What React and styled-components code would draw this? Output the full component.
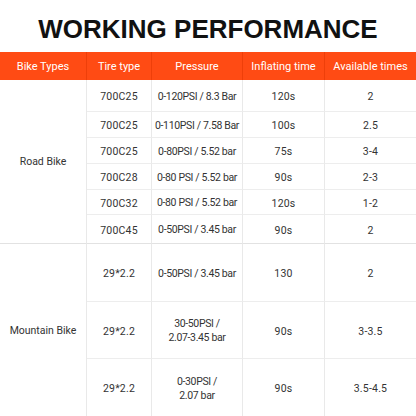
import styled, { createGlobalStyle } from 'styled-components';

const GlobalStyle = createGlobalStyle`
  body {
    margin: 0;
    background: #ffffff;
    font-family: Roboto, "Liberation Sans", Arial, sans-serif;
  }
`;

const roadRows = [
  { tire: '700C25', pressure: ['0-120PSI / 8.3 Bar'], time: '120s', times: '2' },
  { tire: '700C25', pressure: ['0-110PSI / 7.58 Bar'], time: '100s', times: '2.5' },
  { tire: '700C25', pressure: ['0-80PSI / 5.52 bar'], time: '75s', times: '3-4' },
  { tire: '700C28', pressure: ['0-80 PSI / 5.52 bar'], time: '90s', times: '2-3' },
  { tire: '700C32', pressure: ['0-80 PSI / 5.52 bar'], time: '120s', times: '1-2' },
  { tire: '700C45', pressure: ['0-50PSI / 3.45 bar'], time: '90s', times: '2' },
];

const mountainRows = [
  { tire: '29*2.2', pressure: ['0-50PSI / 3.45 bar'], time: '130', times: '2' },
  { tire: '29*2.2', pressure: ['30-50PSI /', '2.07-3.45 bar'], time: '90s', times: '3-3.5' },
  { tire: '29*2.2', pressure: ['0-30PSI /', '2.07 bar'], time: '90s', times: '3.5-4.5' },
];

const headers = ['Bike Types', 'Tire type', 'Pressure', 'Inflating time', 'Available times'];

const App = () => {
  return (
    <Page>
      <GlobalStyle />
      <Title>WORKING PERFORMANCE</Title>
      <Table>
        {headers.map((h, i) => (
          <HeadCell key={h} $last={i === headers.length - 1}>{h}</HeadCell>
        ))}

        <TypeCell $span={roadRows.length}>Road Bike</TypeCell>
        {roadRows.map((row, i) => {
          const end = i === roadRows.length - 1;
          return [
            <Cell key={`rt${i}`} $strong={end}>{row.tire}</Cell>,
            <Cell key={`rp${i}`} $strong={end} $tight>{row.pressure.map((p) => <Line key={p}>{p}</Line>)}</Cell>,
            <Cell key={`ri${i}`} $strong={end}>{row.time}</Cell>,
            <Cell key={`ra${i}`} $strong={end} $last>{row.times}</Cell>,
          ];
        })}

        <TypeCell $span={mountainRows.length} $open>Mountain Bike</TypeCell>
        {mountainRows.map((row, i) => {
          const end = i === mountainRows.length - 1;
          return [
            <Cell key={`mt${i}`} $open={end}>{row.tire}</Cell>,
            <Cell key={`mp${i}`} $open={end} $tight>{row.pressure.map((p) => <Line key={p}>{p}</Line>)}</Cell>,
            <Cell key={`mi${i}`} $open={end}>{row.time}</Cell>,
            <Cell key={`ma${i}`} $open={end} $last>{row.times}</Cell>,
          ];
        })}
      </Table>
    </Page>
  );
};

const Page = styled.div`
  width: 416px;
  height: 416px;
  overflow: hidden;
  background: #ffffff;
`;

const Title = styled.div`
  height: 52px;
  display: flex;
  align-items: center;
  justify-content: center;
  padding-top: 6px;
  box-sizing: border-box;
  font-family: "Liberation Sans", Arial, sans-serif;
  font-size: 26px;
  font-weight: bold;
  color: #111111;
`;

const Table = styled.div`
  display: grid;
  grid-template-columns: 87px 65px 91px 82px 91px;
  grid-template-rows: 28px 32px 26px 26px 26px 25px 29px 58px 57px 57px;
`;

const HeadCell = styled.div`
  display: flex;
  align-items: center;
  justify-content: center;
  white-space: nowrap;
  background: #ff4b14;
  color: #ffffff;
  font-size: 11px;
  border-right: ${(p) => (p.$last ? 'none' : '1px solid #ee3f0a')};
`;

const TypeCell = styled.div`
  grid-row: span ${(p) => p.$span};
  display: flex;
  align-items: center;
  justify-content: center;
  font-size: 10.5px;
  color: #333333;
  border-right: 1px solid #e9e9e9;
  border-bottom: ${(p) => (p.$open ? 'none' : '1px solid #e2e2e2')};
`;

const Cell = styled.div`
  display: flex;
  flex-direction: column;
  align-items: center;
  justify-content: center;
  text-align: center;
  white-space: nowrap;
  font-size: 10.5px;
  letter-spacing: ${(p) => (p.$tight ? '-0.35px' : '0.2px')};
  color: #333333;
  padding-top: 2px;
  box-sizing: border-box;
  border-right: ${(p) => (p.$last ? 'none' : '1px solid #e9e9e9')};
  border-bottom: ${(p) => (p.$open ? 'none' : p.$strong ? '1px solid #e2e2e2' : '1px solid #ededed')};
`;

const Line = styled.span`
  line-height: 14px;
`;

export default App;
